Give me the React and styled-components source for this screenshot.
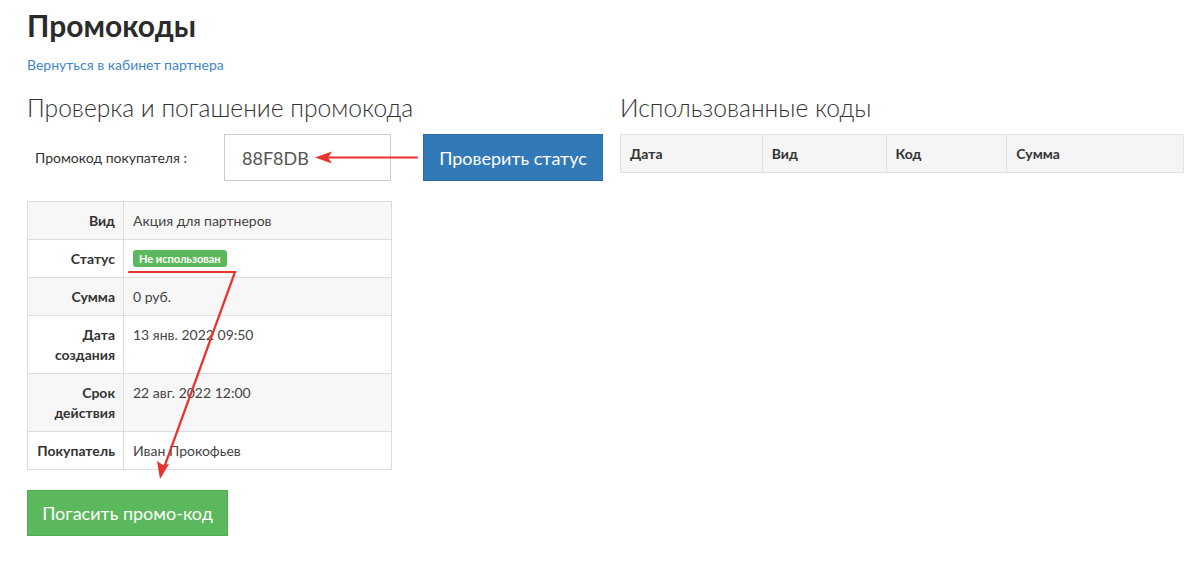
import React from "react";
import styled, { createGlobalStyle } from "styled-components";

const Global = createGlobalStyle`
  html, body { margin: 0; padding: 0; background: #fff; }
  body { font-family: Lato, "Open Sans", sans-serif; color: #333; }
  * { box-sizing: border-box; }
`;

const Page = styled.div`
  position: relative;
  width: 1200px;
  height: 565px;
  padding: 0 16px 0 27px;
  overflow: hidden;
`;

const Title = styled.h1`
  margin: 0;
  padding-top: 7px;
  font-size: 30px;
  line-height: 36px;
  font-weight: 700;
  color: #2b2b2b;
`;

const BackLink = styled.a`
  display: inline-block;
  margin-top: 12px;
  font-size: 14px;
  line-height: 20px;
  color: #3f86c9;
  text-decoration: none;
`;

const Columns = styled.div`
  display: flex;
  gap: 17px;
  margin-top: 18px;
`;

const Column = styled.section`
  width: ${(p) => p.$w}px;
  display: flex;
  flex-direction: column;
  align-items: flex-start;
`;

const Heading = styled.h2`
  margin: 0 0 11px;
  font-size: 24.6px;
  line-height: 30px;
  font-weight: 300;
  color: #333;
`;

const FormRow = styled.div`
  display: flex;
  align-items: center;
  height: 47px;
`;

const Label = styled.label`
  width: 197px;
  padding-left: 8px;
  font-size: 14px;
  color: #333;
`;

const CodeInput = styled.div`
  width: 167px;
  height: 47px;
  border: 1px solid #ccc;
  padding-left: 17px;
  display: flex;
  align-items: center;
  font-size: 18px;
  color: #555;
`;

const Button = styled.button`
  width: ${(p) => p.$w}px;
  height: ${(p) => p.$h}px;
  margin-left: ${(p) => p.$ml || 0}px;
  margin-top: ${(p) => p.$mt || 0}px;
  border: 1px solid ${(p) => p.$border};
  background: ${(p) => p.$bg};
  color: #fff;
  font-family: inherit;
  font-size: 18px;
  padding: 0;
  cursor: pointer;
`;

const InfoTable = styled.table`
  width: 365px;
  margin-top: 20px;
  border-collapse: collapse;
  border: 1px solid #ddd;
  font-size: 14px;
  tr:nth-child(odd) { background: #f7f7f7; }
`;

const LabelCell = styled.th`
  width: 96px;
  border: 1px solid #ddd;
  padding: 9px 8px 8px;
  line-height: 20px;
  text-align: right;
  vertical-align: top;
  font-weight: 700;
  color: #333;
`;

const ValueCell = styled.td`
  border: 1px solid #ddd;
  padding: 9px 8px 8px 9px;
  line-height: 20px;
  vertical-align: top;
  color: #444;
`;

const Badge = styled.span`
  display: inline-block;
  background: #5cb85c;
  color: #fff;
  font-size: 11px;
  font-weight: 700;
  line-height: 17px;
  padding: 0 6px;
  border-radius: 3px;
  vertical-align: 1px;
`;

const UsedTable = styled.table`
  width: 564px;
  border-collapse: collapse;
  border: 1px solid #e2e2e2;
  font-size: 14px;
`;

const HeadCell = styled.th`
  width: ${(p) => p.$w}px;
  background: #f5f5f5;
  border: 1px solid #e2e2e2;
  height: 38px;
  padding: 0 9px;
  text-align: left;
  font-weight: 700;
  color: #333;
`;

const Overlay = styled.svg`
  position: absolute;
  left: 0;
  top: 0;
  pointer-events: none;
`;

const rows = [
  ["Вид", "Акция для партнеров"],
  ["Статус", <Badge>Не использован</Badge>],
  ["Сумма", "0 руб."],
  [<>Дата<br />создания</>, "13 янв. 2022 09:50"],
  [<>Срок<br />действия</>, "22 авг. 2022 12:00"],
  ["Покупатель", "Иван Прокофьев"],
];

export default function App() {
  return (
    <>
      <Global />
      <Page>
        <Title>Промокоды</Title>
        <BackLink href="#">Вернуться в кабинет партнера</BackLink>
        <Columns>
          <Column $w={576}>
            <Heading>Проверка и погашение промокода</Heading>
            <FormRow>
              <Label>Промокод покупателя :</Label>
              <CodeInput>88F8DB</CodeInput>
              <Button $w={180} $h={47} $ml={32} $bg="#3279b8" $border="#2e6da4">
                Проверить статус
              </Button>
            </FormRow>
            <InfoTable>
              <tbody>
                {rows.map(([k, v], i) => (
                  <tr key={i}>
                    <LabelCell>{k}</LabelCell>
                    <ValueCell>{v}</ValueCell>
                  </tr>
                ))}
              </tbody>
            </InfoTable>
            <Button $w={201} $h={46} $mt={20} $bg="#5cb85c" $border="#4cae4c">
              Погасить промо-код
            </Button>
          </Column>
          <Column $w={564}>
            <Heading>Использованные коды</Heading>
            <UsedTable>
              <thead>
                <tr>
                  <HeadCell $w={142}>Дата</HeadCell>
                  <HeadCell $w={124}>Вид</HeadCell>
                  <HeadCell $w={121}>Код</HeadCell>
                  <HeadCell $w={177}>Сумма</HeadCell>
                </tr>
              </thead>
            </UsedTable>
          </Column>
        </Columns>
        <Overlay width="1200" height="565" viewBox="0 0 1200 565">
          <g stroke="#e8322b" strokeWidth="2.2" fill="none" strokeLinecap="round">
            <line x1="417" y1="157.5" x2="326" y2="157.5" />
            <polyline points="129,272 235,272 165,465" />
          </g>
          <g fill="#e8322b">
            <polygon points="315,157.5 332,151.5 328,157.5 332,163.5" />
            <polygon points="160,479 157,461 163,465 169,464" />
          </g>
        </Overlay>
      </Page>
    </>
  );
}
